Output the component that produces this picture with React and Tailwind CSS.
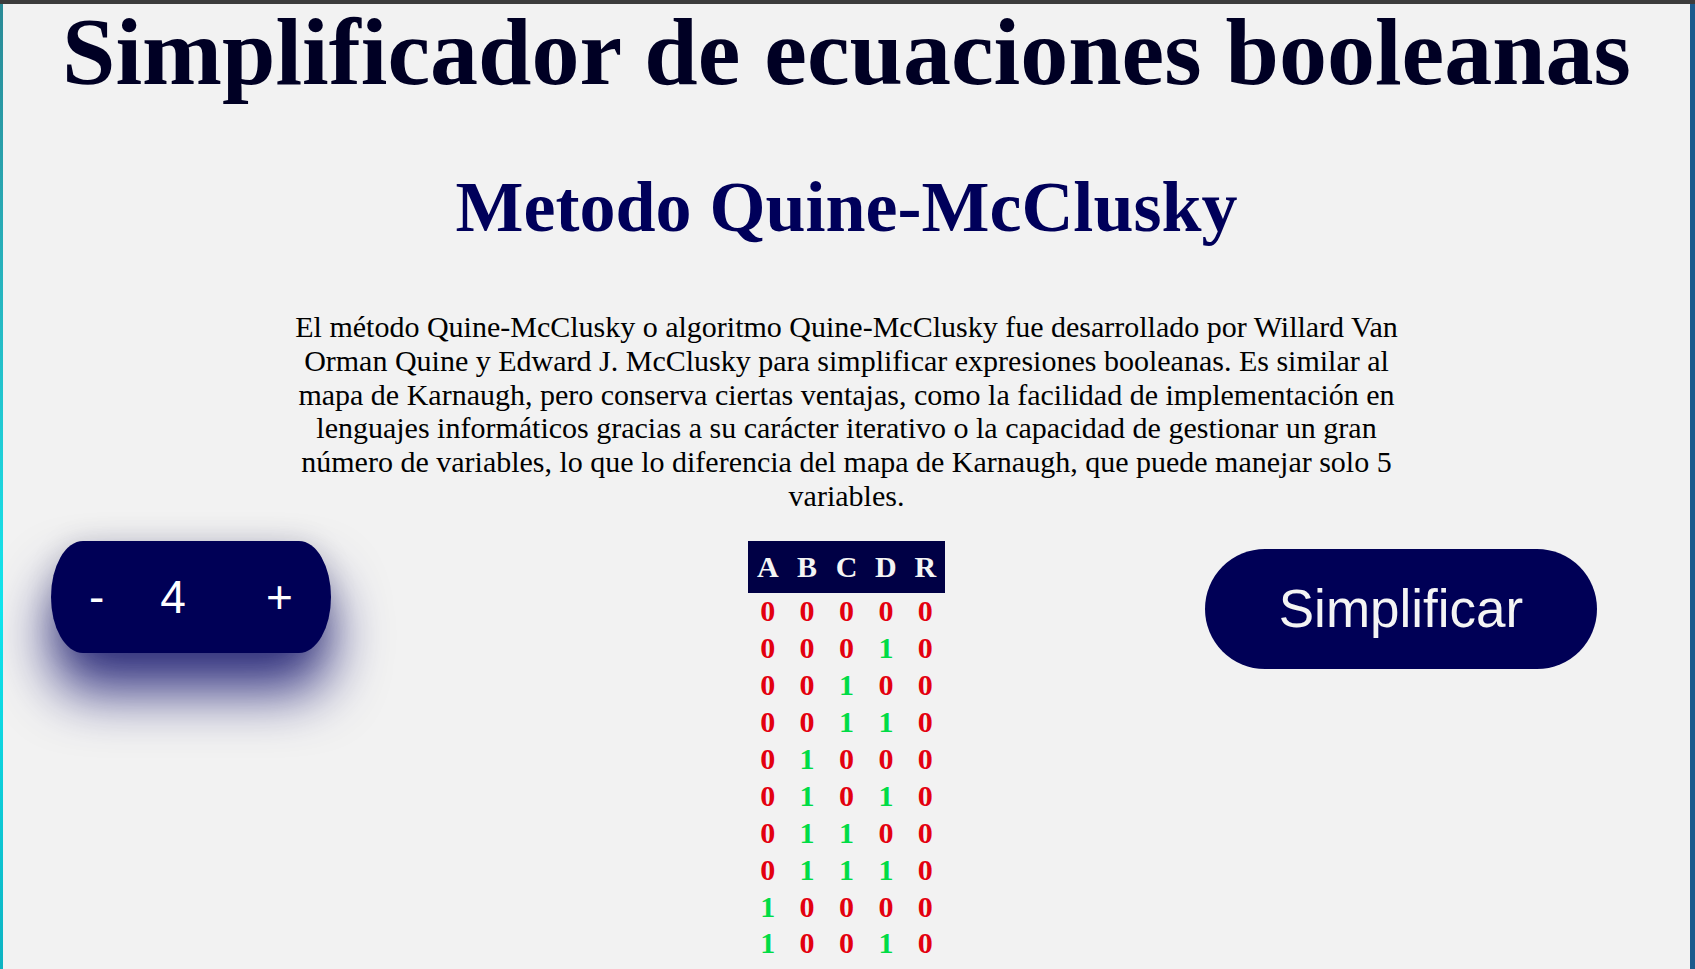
import React, { useState } from "react";

const VARS = ["A", "B", "C", "D"];

const buildRows = (n) => {
  const rows = [];
  for (let i = 0; i < 2 ** n; i++) {
    const bits = [];
    for (let b = n - 1; b >= 0; b--) bits.push((i >> b) & 1);
    rows.push([...bits, 0]);
  }
  return rows;
};

const Counter = ({ value, onDec, onInc }) => (
  <div className="flex items-center w-[280px] h-[112px] rounded-[32px/56px] bg-[#000056] text-white text-[46px] leading-none font-['Liberation_Sans',Arial,sans-serif] shadow-[0_0_28px_rgba(0,0,40,0.12),0_38px_56px_rgba(0,0,100,0.8)]">
    <button onClick={onDec} className="ml-[38px] w-[15px] text-center leading-none">
      -
    </button>
    <span className="ml-[56px] w-[26px] text-center">{value}</span>
    <button onClick={onInc} className="ml-[80px] w-[27px] text-center leading-none">
      +
    </button>
  </div>
);

const TruthTable = ({ n }) => {
  const rows = buildRows(n);
  const headers = [...VARS.slice(0, n), "R"];
  return (
    <div className="flex flex-col font-['Liberation_Serif','Times_New_Roman',serif] font-bold text-[30px]">
      <div className="flex h-[52px] bg-[#000045] text-[#f4f4f4]">
        {headers.map((h) => (
          <div key={h} className="w-[39.4px] flex items-center justify-center">
            {h}
          </div>
        ))}
      </div>
      {rows.map((row, i) => (
        <div key={i} className="flex h-[36.9px]">
          {row.map((v, j) => (
            <div
              key={j}
              className={`w-[39.4px] flex items-center justify-center ${
                v ? "text-[#00dc46]" : "text-[#e3000f]"
              }`}
            >
              {v}
            </div>
          ))}
        </div>
      ))}
    </div>
  );
};

export default function App() {
  const [n, setN] = useState(4);

  return (
    <div className="min-h-screen flex flex-col bg-[#3c3c3c]">
      <div className="h-[4px] bg-[#3c3c3c]" />
      <div className="flex flex-1">
        <div className="w-[3px] bg-gradient-to-b from-[#2a8a96] via-[#10e8f0] to-[#0b8ea2]" />
        <main className="flex-1 bg-[#f2f2f2] pb-10">
          <h1 className="text-center text-[96px] leading-none font-bold text-[#000024] font-['Liberation_Serif','Times_New_Roman',serif]">
            Simplificador de ecuaciones booleanas
          </h1>
          <h2 className="mt-[71px] text-center text-[72px] leading-none font-bold text-[#00005a] font-['Liberation_Serif','Times_New_Roman',serif]">
            Metodo Quine-McClusky
          </h2>
          <p className="mt-[67px] mx-auto w-[1130px] text-center text-[30px] leading-[33.75px] text-black font-['Liberation_Serif','Times_New_Roman',serif]">
            El método Quine-McClusky o algoritmo Quine-McClusky fue desarrollado
            por Willard Van Orman Quine y Edward J. McClusky para simplificar
            expresiones booleanas. Es similar al mapa de Karnaugh, pero conserva
            ciertas ventajas, como la facilidad de implementación en lenguajes
            informáticos gracias a su carácter iterativo o la capacidad de
            gestionar un gran número de variables, lo que lo diferencia del mapa
            de Karnaugh, que puede manejar solo 5 variables.
          </p>

          <div className="mt-[28px] grid grid-cols-3 items-start">
            <div className="pl-[48px]">
              <Counter
                value={n}
                onDec={() => setN((v) => Math.max(2, v - 1))}
                onInc={() => setN((v) => Math.min(4, v + 1))}
              />
            </div>
            <div className="flex justify-center">
              <TruthTable n={n} />
            </div>
            <div className="flex justify-end pr-[93px] pt-[8px]">
              <button className="w-[392px] h-[120px] rounded-full bg-[#000056] text-[#f4f4f4] text-[53px] font-['Liberation_Sans',Arial,sans-serif]">
                Simplificar
              </button>
            </div>
          </div>
        </main>
        <div className="w-[5px] bg-[#1b5b8d]" />
      </div>
    </div>
  );
}
